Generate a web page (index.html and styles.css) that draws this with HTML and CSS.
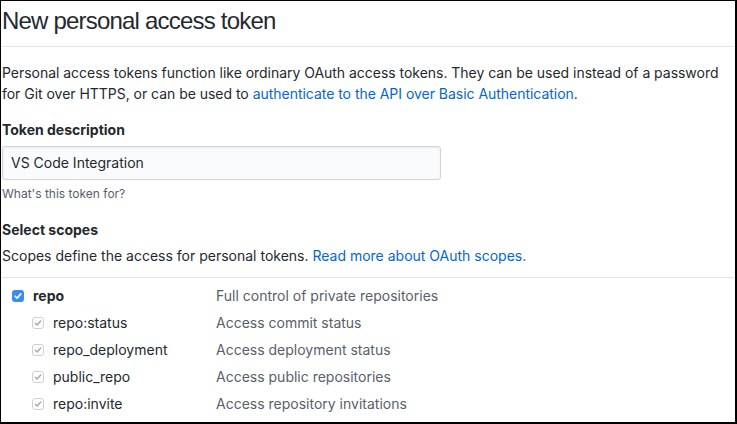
FILE: index.html
```html
<!DOCTYPE html>
<html>
<head>
<meta charset="utf-8">
<link rel="stylesheet" href="styles.css">
</head>
<body>
<div class="frame">
  <div class="subhead">
    <h2 class="subhead-title">New personal access token</h2>
  </div>
  <p class="intro">Personal access tokens function like ordinary OAuth access tokens. They can be used instead of a password for Git over HTTPS, or can be used to <a href="#">authenticate to the API over Basic Authentication</a>.</p>
  <div class="form-group">
    <label class="label">Token description</label>
    <div class="input">VS Code Integration</div>
    <p class="note">What's this token for?</p>
  </div>
  <h3 class="section-title">Select scopes</h3>
  <p class="scopes-intro">Scopes define the access for personal tokens. <a href="#">Read more about OAuth scopes.</a></p>
  <div class="scopes">
    <div class="scope parent">
      <div class="scope-name">
        <span class="cb cb-on"><svg viewBox="0 0 12 12" width="12" height="12"><path d="M3.2 6.2 L5.1 8.1 L8.8 3.9" fill="none" stroke="#fff" stroke-width="1.6" stroke-linecap="round" stroke-linejoin="round"/></svg></span>
        <span class="name-bold">repo</span>
      </div>
      <div class="scope-desc">Full control of private repositories</div>
    </div>
    <div class="scope child">
      <div class="scope-name">
        <span class="cb cb-dis"><svg viewBox="0 0 12 12" width="12" height="12"><path d="M3.3 6.2 L5.1 8 L8.7 4" fill="none" stroke="#a6a6a6" stroke-width="1.4" stroke-linecap="round" stroke-linejoin="round"/></svg></span>
        <span class="name">repo:status</span>
      </div>
      <div class="scope-desc">Access commit status</div>
    </div>
    <div class="scope child">
      <div class="scope-name">
        <span class="cb cb-dis"><svg viewBox="0 0 12 12" width="12" height="12"><path d="M3.3 6.2 L5.1 8 L8.7 4" fill="none" stroke="#a6a6a6" stroke-width="1.4" stroke-linecap="round" stroke-linejoin="round"/></svg></span>
        <span class="name">repo_deployment</span>
      </div>
      <div class="scope-desc">Access deployment status</div>
    </div>
    <div class="scope child">
      <div class="scope-name">
        <span class="cb cb-dis"><svg viewBox="0 0 12 12" width="12" height="12"><path d="M3.3 6.2 L5.1 8 L8.7 4" fill="none" stroke="#a6a6a6" stroke-width="1.4" stroke-linecap="round" stroke-linejoin="round"/></svg></span>
        <span class="name">public_repo</span>
      </div>
      <div class="scope-desc">Access public repositories</div>
    </div>
    <div class="scope child">
      <div class="scope-name">
        <span class="cb cb-dis"><svg viewBox="0 0 12 12" width="12" height="12"><path d="M3.3 6.2 L5.1 8 L8.7 4" fill="none" stroke="#a6a6a6" stroke-width="1.4" stroke-linecap="round" stroke-linejoin="round"/></svg></span>
        <span class="name">repo:invite</span>
      </div>
      <div class="scope-desc">Access repository invitations</div>
    </div>
  </div>
</div>
</body>
</html>
```

FILE: styles.css
```css
* { box-sizing: border-box; }
html, body { margin: 0; padding: 0; background: #fff; }
body {
  font-family: Inter, "Liberation Sans", Arial, sans-serif;
  font-size: 14px;
  line-height: 1.5;
  color: #24292e;
}
.frame {
  width: 737px;
  height: 424px;
  border: 1px solid #000;
  border-right-width: 2px;
  border-bottom-width: 2px;
  overflow: hidden;
  padding-left: 1px;
}
a { color: #0366d6; text-decoration: none; }
.subhead {
  border-bottom: 1px solid #e1e4e8;
  height: 46px;
  margin-left: -1px;
  padding-left: 1px;
  display: flex;
  align-items: flex-end;
}
.subhead-title {
  margin: 0;
  font-family: "Liberation Sans", Arial, sans-serif;
  font-size: 24px;
  font-weight: 400;
  letter-spacing: -0.8px;
  line-height: 1.5;
  padding-bottom: 7px;
}
.intro {
  margin: 15px 0 0;
  line-height: 21px;
  letter-spacing: -0.03px;
}
.form-group { margin-top: 15px; }
.label {
  display: block;
  font-weight: 700;
  line-height: 21px;
}
.input {
  margin-top: 6px;
  width: 439px;
  height: 34px;
  background: #fafbfc;
  border: 1px solid #d1d5da;
  border-radius: 3px;
  box-shadow: inset 0 1px 2px rgba(27,31,35,0.075);
  padding: 6px 8px;
  font-size: 14px;
  line-height: 20px;
}
.note {
  margin: 5px 0 0;
  font-size: 12px;
  color: #586069;
  line-height: 18px;
}
.section-title {
  margin: 16px 0 0;
  font-size: 14px;
  font-weight: 700;
  line-height: 21px;
}
.scopes-intro {
  margin: 5px 0 0;
  line-height: 21px;
}
.scopes {
  margin-top: 11px;
  margin-left: -1px;
  border-top: 1px solid #e1e4e8;
  padding-top: 4px;
}
.scope {
  display: flex;
  align-items: center;
  height: 27px;
}
.scope-name {
  width: 215px;
  display: flex;
  align-items: center;
  padding-left: 11px;
}
.scope.child .scope-name { padding-left: 31px; }
.cb {
  width: 12px;
  height: 12px;
  border-radius: 3px;
  display: inline-flex;
  margin-right: 9px;
}
.cb svg { display: block; }
.cb-on { background: #3b8cf2; }
.cb-dis { background: #fff; border: 1px solid #cfcfcf; }
.cb-dis svg { margin: -1px; }
.name-bold { font-weight: 700; }
.scope-desc { color: #586069; }
```
